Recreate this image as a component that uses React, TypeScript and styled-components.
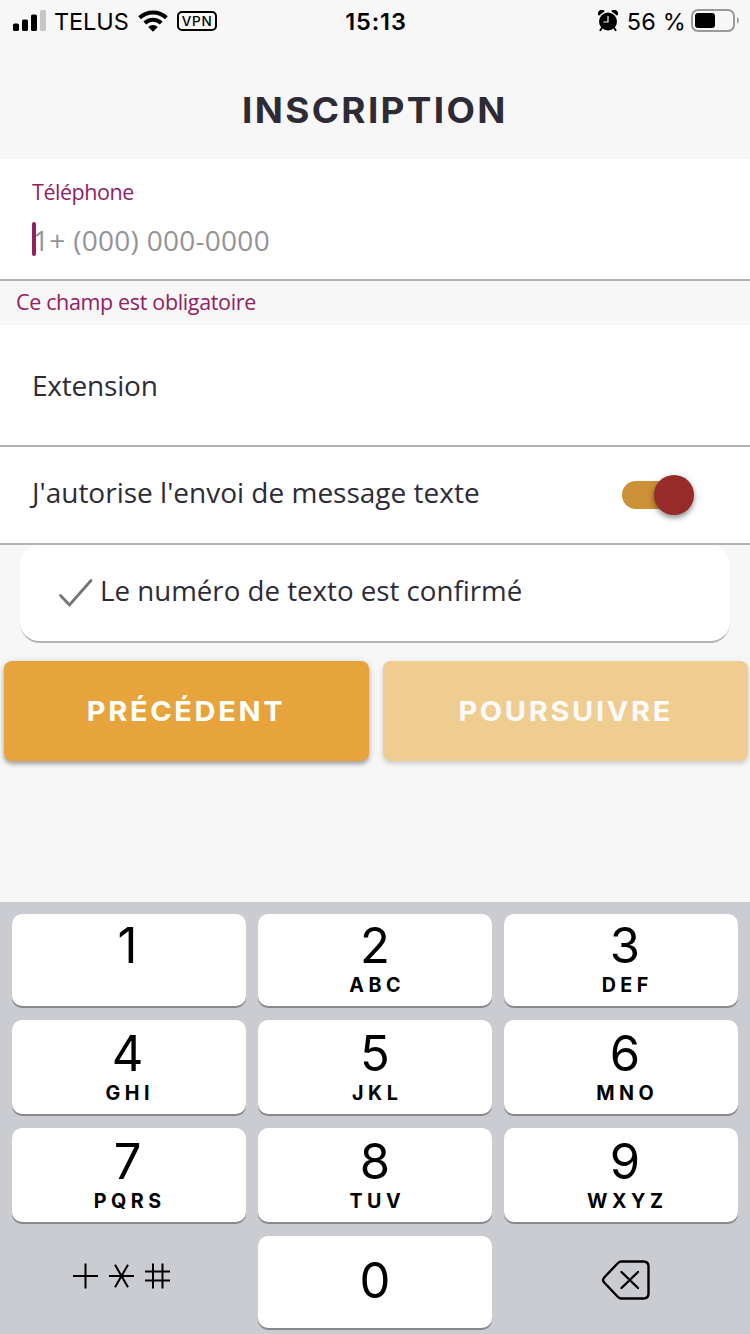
import React from "react";
import styled, { createGlobalStyle } from "styled-components";

const GlobalStyle = createGlobalStyle`
  * { box-sizing: border-box; }
  body { margin: 0; background: #f7f7f7; }
`;

const ui = `Inter, "Liberation Sans", sans-serif`;
const humanist = `"Open Sans", "Noto Sans", sans-serif`;

const Screen = styled.div`
  width: 750px;
  height: 1334px;
  display: flex;
  flex-direction: column;
  overflow: hidden;
  background: #f7f7f7;
  color: #2e2b37;
  font-family: ${humanist};
`;

const StatusBar = styled.header`
  height: 40px;
  flex: none;
  display: grid;
  grid-template-columns: 1fr auto 1fr;
  align-items: center;
  padding: 0 11px 0 13px;
  font-family: ${ui};
  font-size: 23.5px;
  line-height: 40px;
  color: #000;
`;

const StatusGroup = styled.div<{ $end?: boolean }>`
  display: flex;
  align-items: center;
  justify-content: ${(p) => (p.$end ? "flex-end" : "flex-start")};
  height: 40px;
  svg { display: block; flex: none; }
`;

const Carrier = styled.span`
  margin: 0 9px 0 7px;
  padding-top: 2px;
  letter-spacing: -0.1px;
`;

const Clock = styled.span`
  padding-top: 2px;
  font-weight: 600;
  letter-spacing: 0.9px;
`;

const Percent = styled.span`
  margin: 0 5px 0 9px;
  padding-top: 2px;
  letter-spacing: 0.2px;
`;

const VpnBadge = styled.span`
  width: 40px;
  height: 20px;
  margin-left: 9px;
  border: 2px solid #000;
  border-radius: 5px;
  font-size: 13.5px;
  font-weight: 500;
  line-height: 16px;
  letter-spacing: 0.8px;
  text-align: center;
  text-indent: 1px;
`;

const TitleBar = styled.div`
  height: 119px;
  flex: none;
  display: flex;
  align-items: center;
  justify-content: center;
  padding-top: 21px;
`;

const Title = styled.h1`
  margin: 0;
  font-family: ${ui};
  font-size: 35px;
  line-height: 44px;
  font-weight: 700;
  letter-spacing: 2.2px;
  transform: scaleX(1.055);
`;

const Field = styled.div<{ $height: number }>`
  height: ${(p) => p.$height}px;
  flex: none;
  display: flex;
  flex-direction: column;
  padding: 0 32px;
  background: #fff;
  border-bottom: 2px solid #b6b0b8;
`;

const Label = styled.label`
  margin-top: 18px;
  font-size: 21.5px;
  line-height: 30px;
  letter-spacing: -0.45px;
  color: #93205f;
`;

const InputLine = styled.div`
  display: flex;
  align-items: center;
  margin-top: 13px;
  height: 40px;
`;

const Caret = styled.span`
  width: 4px;
  height: 34px;
  margin: -3px -3px 0 0;
  border-radius: 2px;
  background: #93205f;
  z-index: 1;
`;

const Placeholder = styled.span`
  font-size: 28px;
  line-height: 40px;
  letter-spacing: 0.28px;
  color: #949498;
`;

const ErrorLine = styled.div`
  height: 44px;
  flex: none;
  padding-left: 16px;
  font-size: 21.5px;
  line-height: 41px;
  letter-spacing: -0.35px;
  color: #93205f;
`;

const BodyText = styled.span`
  font-size: 28px;
  line-height: 40px;
  white-space: nowrap;
`;

const ExtensionText = styled(BodyText)`
  margin-top: 40px;
  letter-spacing: -0.2px;
`;

const ToggleRow = styled.div`
  height: 98px;
  flex: none;
  display: flex;
  align-items: center;
  justify-content: space-between;
  padding: 0 56px 0 32px;
  background: #fff;
  border-bottom: 2px solid #b6b0b8;
`;

const ToggleText = styled(BodyText)`
  padding-bottom: 6px;
`;

const ConfirmText = styled(BodyText)`
  font-size: 27.7px;
`;

const Track = styled.span`
  width: 72px;
  height: 28px;
  display: flex;
  align-items: center;
  justify-content: flex-end;
  border-radius: 14px;
  background: linear-gradient(90deg, #cc9036 60px, transparent 60px);
`;

const Thumb = styled.span`
  width: 40px;
  height: 40px;
  flex: none;
  border-radius: 50%;
  background: #962b29;
  box-shadow: 0 3px 5px rgba(0, 0, 0, 0.36), 0 1px 10px rgba(0, 0, 0, 0.12);
`;

const Card = styled.div`
  height: 98px;
  flex: none;
  display: flex;
  align-items: center;
  margin: 0 20px;
  padding: 0 0 6px 38px;
  border-bottom: 2px solid #b6b0b8;
  border-radius: 20px;
  background: #fff;
`;

const CheckIcon = styled.svg`
  width: 36px;
  height: 30px;
  margin: 6px 6px 0 0;
`;

const Actions = styled.div`
  display: grid;
  grid-template-columns: 365px 365px;
  gap: 14px;
  margin: 18px 0 0 4px;
  height: 100px;
  flex: none;
`;

const Action = styled.button<{ $muted?: boolean }>`
  border: 0;
  padding: 0;
  border-radius: 8px;
  background: ${(p) => (p.$muted ? "#efcd90" : "#e8a43c")};
  color: ${(p) => (p.$muted ? "#fbfafa" : "#fff")};
  box-shadow: ${(p) =>
    p.$muted
      ? "0 3px 4px rgba(0,0,0,.13), 0 1px 10px rgba(0,0,0,.06)"
      : "0 3px 4px rgba(0,0,0,.3), 0 1px 10px rgba(0,0,0,.11)"};
  font-family: ${ui};
  font-size: 27.5px;
  font-weight: 700;
  line-height: 100px;
  letter-spacing: 2.5px;
`;

const ActionLabel = styled.span`
  display: inline-block;
  transform: scaleX(1.055);
`;

const Keyboard = styled.div`
  flex: 1;
  margin-top: 141px;
  padding: 12px 12px 0;
  display: grid;
  grid-template-columns: repeat(3, 234px);
  grid-template-rows: 92px 94px 94px 92px;
  gap: 14px 12px;
  background: #cbccd1;
  color: #000;
  font-family: ${ui};
`;

const Key = styled.button`
  border: 0;
  padding: 5px 0 0;
  display: flex;
  flex-direction: column;
  align-items: center;
  justify-content: flex-start;
  border-radius: 10px;
  background: #fff;
  box-shadow: 0 2px 0 #87888c;
  color: #000;
  font-family: inherit;

  &:nth-child(-n + 3) { padding-top: 3px; }
  &:nth-child(3n + 1) { padding-right: 3px; }
  &:nth-child(3n) { padding-left: 8px; }
`;

const ZeroKey = styled(Key)`
  justify-content: center;
  padding: 0 0 2px;
`;

const Digit = styled.span`
  font-size: 49px;
  line-height: 58px;
`;

const Letters = styled.span`
  font-size: 19.7px;
  font-weight: 650;
  line-height: 20px;
  letter-spacing: 4.5px;
  text-indent: 4.5px;
`;

const PlainKey = styled.div<{ $pad: string }>`
  display: flex;
  align-items: center;
  justify-content: center;
  padding: ${(p) => p.$pad};
`;

const keys: [string, string][] = [
  ["1", ""], ["2", "ABC"], ["3", "DEF"],
  ["4", "GHI"], ["5", "JKL"], ["6", "MNO"],
  ["7", "PQRS"], ["8", "TUV"], ["9", "WXYZ"],
];

const Signal = () => (
  <svg width="34" height="22" viewBox="0 0 34 22">
    <rect x="0" y="13.5" width="6" height="7.5" rx="1.6" />
    <rect x="9" y="9.5" width="6" height="11.5" rx="1.6" />
    <rect x="18" y="4.5" width="6" height="16.5" rx="1.6" />
    <rect x="27" y="0" width="6" height="21" rx="1.6" fill="#c6c6c6" />
  </svg>
);

const Wifi = () => (
  <svg width="30" height="22" viewBox="0 0 30 22">
    <g fill="none" stroke="#000" strokeWidth="4">
      <path d="M1.6 7.8 A19.3 19.3 0 0 1 28.4 7.8" />
      <path d="M6.8 13 A11.9 11.9 0 0 1 23.2 13" />
    </g>
    <path d="M10.2 16.9 A7 7 0 0 1 19.8 16.9 L15 21.8 Z" />
  </svg>
);

const Alarm = () => (
  <svg width="20" height="22" viewBox="0 0 20 22">
    <circle cx="10" cy="11.5" r="9" />
    <path d="M0.8 5.8 A3.6 3.6 0 0 1 6.8 1.3 Z M19.2 5.8 A3.6 3.6 0 0 0 13.2 1.3 Z" />
    <path d="M4.2 17.5 L2.3 20.2 M15.8 17.5 L17.7 20.2" stroke="#000" strokeWidth="1.8" strokeLinecap="round" />
    <path d="M10 6 V12 H5.2" fill="none" stroke="#f7f7f7" strokeWidth="1.2" />
  </svg>
);

const Battery = () => (
  <svg width="48" height="24" viewBox="0 0 48 24">
    <rect x="1" y="1" width="42" height="21" rx="6" fill="none" stroke="#999" strokeWidth="2" />
    <rect x="4" y="4" width="20" height="15" rx="3" />
    <path d="M46 8 Q50 11.5 46 15 Z" fill="#999" />
  </svg>
);

export default function App() {
  return (
    <Screen>
      <GlobalStyle />
      <StatusBar>
        <StatusGroup>
          <Signal />
          <Carrier>TELUS</Carrier>
          <Wifi />
          <VpnBadge>VPN</VpnBadge>
        </StatusGroup>
        <Clock>15:13</Clock>
        <StatusGroup $end>
          <Alarm />
          <Percent>56 %</Percent>
          <Battery />
        </StatusGroup>
      </StatusBar>
      <TitleBar>
        <Title>INSCRIPTION</Title>
      </TitleBar>
      <Field $height={122}>
        <Label>Téléphone</Label>
        <InputLine>
          <Caret />
          <Placeholder>1+ (000) 000-0000</Placeholder>
        </InputLine>
      </Field>
      <ErrorLine>Ce champ est obligatoire</ErrorLine>
      <Field $height={122}>
        <ExtensionText>Extension</ExtensionText>
      </Field>
      <ToggleRow>
        <ToggleText>J'autorise l'envoi de message texte</ToggleText>
        <Track>
          <Thumb />
        </Track>
      </ToggleRow>
      <Card>
        <CheckIcon viewBox="0 0 36 30">
          <path d="M2.5 17.5 L11.5 27 L33 2.5" fill="none" stroke="#757575" strokeWidth="2.8" strokeLinecap="round" />
        </CheckIcon>
        <ConfirmText>Le numéro de texto est confirmé</ConfirmText>
      </Card>
      <Actions>
        <Action>
          <ActionLabel>PRÉCÉDENT</ActionLabel>
        </Action>
        <Action $muted>
          <ActionLabel>POURSUIVRE</ActionLabel>
        </Action>
      </Actions>
      <Keyboard>
        {keys.map(([digit, letters]) => (
          <Key key={digit}>
            <Digit>{digit}</Digit>
            {letters && <Letters>{letters}</Letters>}
          </Key>
        ))}
        <PlainKey $pad="0 16px 8px 0">
          <svg width="100" height="30" viewBox="0 0 100 30">
            <g fill="none" stroke="#000" strokeWidth="2">
              <path d="M2 13 H27 M14.5 0.5 V25.5" />
              <path d="M38 13 H63 M44 1.8 L57 24.2 M57 1.8 L44 24.2" />
              <path d="M74 8.5 H99 M74 17.5 H99 M82 0.5 V25.5 M91.5 0.5 V25.5" />
            </g>
          </svg>
        </PlainKey>
        <ZeroKey>
          <Digit>0</Digit>
        </ZeroKey>
        <PlainKey $pad="0 0 4px 10px">
          <svg width="50" height="40" viewBox="0 0 50 40">
            <g fill="none" stroke="#000" strokeWidth="2.4" strokeLinejoin="round" strokeLinecap="round">
              <path d="M20.5 1.5 H42.5 Q47.5 1.5 47.5 6.5 V33.5 Q47.5 38.5 42.5 38.5 H20.5 Q18.5 38.5 17 37 L3.2 22.5 Q1 20 3.2 17.5 L17 3 Q18.5 1.5 20.5 1.5 Z" />
              <path d="M20.5 12 L37 28 M37 12 L20.5 28" />
            </g>
          </svg>
        </PlainKey>
      </Keyboard>
    </Screen>
  );
}
